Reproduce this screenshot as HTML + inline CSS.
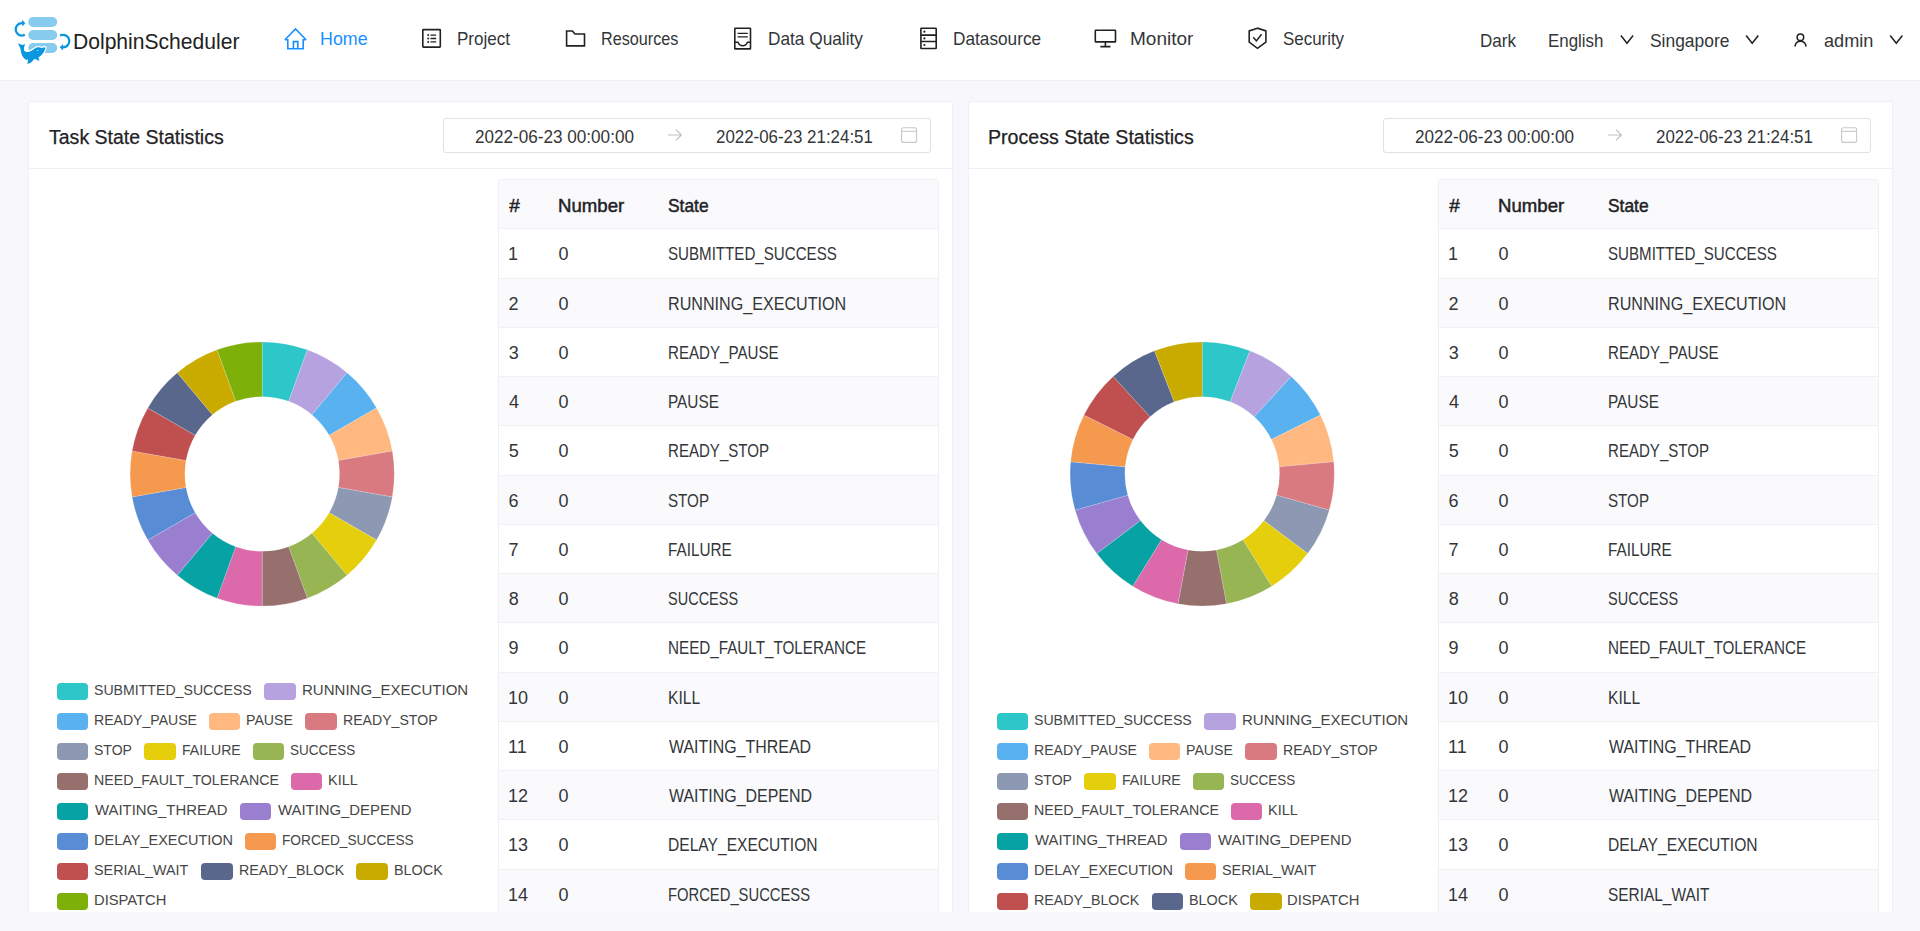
<!DOCTYPE html>
<html><head><meta charset="utf-8"><title>DolphinScheduler</title>
<style>
*{margin:0;padding:0;box-sizing:border-box}
html,body{width:1920px;height:931px;overflow:hidden;background:#f8f8fc;font-family:"Liberation Sans",sans-serif;color:#333639}
.abs{position:absolute}
.tx{position:absolute;line-height:1;white-space:nowrap;transform-origin:0 0}
#hdr{position:absolute;left:0;top:0;width:1920px;height:81px;background:#fff;border-bottom:1px solid #efeff5}
#content{position:absolute;left:0;top:81px;width:1920px;height:831px;overflow:hidden}
.card{position:absolute;top:20px;width:925px;height:1100px;background:#fff;border:1px solid #efeff5;border-radius:3px}
.chd{position:absolute;top:21px;width:923px;height:67px;border-bottom:1px solid #efeff5}
.picker{position:absolute;top:37px;width:488px;height:35px;border:1px solid #e0e0e6;border-radius:3px;background:#fff}
.tbl{position:absolute;width:441px;height:900px;border:1px solid #efeff5;border-radius:3px;background:#fff}
.stripe{width:439px;background:#fafafc}
.thead{width:439px;background:#fafafc;border-radius:2px 2px 0 0}
.hline{width:439px;height:1px;background:#efeff5}
.lrow{position:absolute;height:18px;white-space:nowrap;display:flex}
.li{display:inline-flex;align-items:center;font-size:14px;line-height:18px;color:#464646;margin-right:13px}
.li b{font-weight:normal;position:relative;top:-2px}
.li i{display:inline-block;width:31px;height:17.5px;border-radius:4px;margin-right:7px}
.sw{position:absolute;width:31.25px;height:17.5px;border-radius:4px}

</style></head>
<body>
<div id="hdr">
<svg class="abs" style="left:0;top:0" width="1920" height="80" viewBox="0 0 1920 80">
 <g id="logo">
  <rect x="28.3" y="17.1" width="28.9" height="9.9" rx="5" fill="#87cbee"/>
  <rect x="28.3" y="30" width="28.9" height="10" rx="5" fill="#87cbee"/>
  <rect x="28.3" y="43" width="28.9" height="9.9" rx="5" fill="#87cbee"/>
  <path d="M24 35.2 A6.2 6.2 0 1 1 22.5 23.2" fill="none" stroke="#0b96e0" stroke-width="2.3" stroke-linecap="round"/>
  <path d="M22 19.8 L25.3 23.2 L22.3 26.5 Z" fill="#0b96e0"/>
  <path d="M61 35.2 A6.2 6.2 0 1 1 62.5 47.2" fill="none" stroke="#0b96e0" stroke-width="2.3" stroke-linecap="round"/>
  <path d="M63 44 L59.8 47.3 L62.8 50.6 Z" fill="#0b96e0"/>
  <path d="M17.9 43.35 L22.1 44.9 L25.2 43.9 C24.6 45.5 23.6 48 24 50 C24.5 51.7 26.5 52.2 28.5 52 C31 51.7 34 49 36.3 47.8 C38 47 40 47.2 41.9 48.1 L44.9 47.2 C45.5 47.6 45.5 48.3 45.2 48.8 C44.5 51.5 42.5 54.5 40.5 56 L38.4 57.6 L39.5 60.6 L37.3 60.3 L35.8 59 C35 59.3 34.3 59.5 33.6 59.6 L32 61.8 C30.5 63 29 63.6 27.4 64 L28 59.6 C27 59.8 26.3 59.7 25.7 59.5 C23.5 58.5 21.2 55 20.7 50 C20.5 48.5 19.5 46.5 17.9 43.35 Z" fill="#fff" stroke="#fff" stroke-width="2.6" stroke-linejoin="round"/>
  <path d="M17.9 43.35 L22.1 44.9 L25.2 43.9 C24.6 45.5 23.6 48 24 50 C24.5 51.7 26.5 52.2 28.5 52 C31 51.7 34 49 36.3 47.8 C38 47 40 47.2 41.9 48.1 L44.9 47.2 C45.5 47.6 45.5 48.3 45.2 48.8 C44.5 51.5 42.5 54.5 40.5 56 L38.4 57.6 L39.5 60.6 L37.3 60.3 L35.8 59 C35 59.3 34.3 59.5 33.6 59.6 L32 61.8 C30.5 63 29 63.6 27.4 64 L28 59.6 C27 59.8 26.3 59.7 25.7 59.5 C23.5 58.5 21.2 55 20.7 50 C20.5 48.5 19.5 46.5 17.9 43.35 Z" fill="#0b96e0"/>
  <ellipse cx="37.7" cy="50.5" rx="0.8" ry="0.55" fill="#dff1fb"/>
 </g>
 <g fill="none" stroke="#1890ff" stroke-width="1.6" stroke-linejoin="miter">
  <path d="M287.8 48.7 V39.8 H285 L295.5 29 L306 39.8 H303.2 V48.7 Z" stroke-miterlimit="1.6"/>
  <path d="M293.4 48.7 V41.6 H297.8 V48.7"/>
 </g>
 <g fill="none" stroke="#1f2225" stroke-width="1.6">
  <rect x="422.8" y="29.6" width="17.5" height="17.5" rx="0.6"/>
  <path d="M430.5 35.1 H436.2 M430.5 38.5 H436.2 M430.5 41.9 H436.2" stroke-width="1.4"/>
  <path d="M566.6 31 H572.4 L575 34 H584.5 V45.9 H566.6 Z"/>
  <rect x="734.8" y="28.2" width="15.7" height="20.7" rx="0.5"/>
  <path d="M737.6 33.3 H747.8 M737.6 36.9 H747.8" stroke-width="1.3"/>
  <path d="M734.8 42.3 H738 C739 45.3 741.2 45.8 742.7 45.8 C744.2 45.8 746.4 45.3 747.4 42.3 H750.5" stroke-width="1.4"/>
  <rect x="920.9" y="28.3" width="15.3" height="20.2" rx="0.5"/>
  <path d="M920.9 35.1 H936.2 M920.9 41.5 H936.2"/>
  <rect x="1095.3" y="30.3" width="20.2" height="11.6" rx="0.5"/>
  <path d="M1105.4 41.9 V46.6 M1100.4 46.6 H1110.5"/>
  <path d="M1257.5 28.2 L1249.2 30.9 V42.1 L1257.5 48.3 L1265.9 42.1 V30.9 Z"/>
  <path d="M1253.3 37.3 L1256.4 40.9 L1261.6 34.2" stroke-width="1.5"/>
  <path d="M1620.9 35.5 L1627 43.3 L1633.1 35.5" stroke-width="1.5"/>
  <path d="M1746.1 35.5 L1752.2 43.3 L1758.3 35.5" stroke-width="1.5"/>
  <path d="M1890.2 35.5 L1896.3 43.3 L1902.4 35.5" stroke-width="1.5"/>
  <circle cx="1800.4" cy="37.2" r="3.3" stroke-width="1.5"/>
  <path d="M1794.9 46.5 C1795.5 43 1797.5 41.3 1800.4 41.3 C1803.3 41.3 1805.5 43 1806.1 46.5" stroke-width="1.5"/>
 </g>
 <g fill="#1f2225">
  <circle cx="428.2" cy="35.1" r="1"/><circle cx="428.2" cy="38.5" r="1"/><circle cx="428.2" cy="41.9" r="1"/>
  <circle cx="924.4" cy="31.7" r="1.1"/><circle cx="924.4" cy="38.4" r="1.1"/><circle cx="924.4" cy="45" r="1.1"/>
 </g>
</svg>
<div class="tx" style="left:73.32px;top:30.73px;font-size:22px;color:#222;transform:scaleX(0.9585);">DolphinScheduler</div>
<div class="tx" style="left:320.15px;top:29.84px;font-size:18.5px;color:#1890ff;transform:scaleX(0.9638);">Home</div>
<div class="tx" style="left:457.02px;top:29.94px;font-size:18.5px;color:#333639;transform:scaleX(0.9214);">Project</div>
<div class="tx" style="left:600.69px;top:29.94px;font-size:18.5px;color:#333639;transform:scaleX(0.8754);">Resources</div>
<div class="tx" style="left:768.10px;top:29.94px;font-size:18.5px;color:#333639;transform:scaleX(0.9327);">Data Quality</div>
<div class="tx" style="left:953.10px;top:29.94px;font-size:18.5px;color:#333639;transform:scaleX(0.9312);">Datasource</div>
<div class="tx" style="left:1129.96px;top:29.94px;font-size:18.5px;color:#333639;transform:scaleX(1.0271);">Monitor</div>
<div class="tx" style="left:1283.00px;top:29.94px;font-size:18.5px;color:#333639;transform:scaleX(0.9139);">Security</div>
<div class="tx" style="left:1479.62px;top:31.94px;font-size:18.5px;color:#333639;transform:scaleX(0.9200);">Dark</div>
<div class="tx" style="left:1548.13px;top:31.94px;font-size:18.5px;color:#333639;transform:scaleX(0.9138);">English</div>
<div class="tx" style="left:1650.18px;top:31.94px;font-size:18.5px;color:#333639;transform:scaleX(0.9410);">Singapore</div>
<div class="tx" style="left:1823.77px;top:31.94px;font-size:18.5px;color:#333639;transform:scaleX(0.9794);">admin</div>
</div>

<div id="content">
<div class="card" style="left:28px"></div>
<div class="chd" style="left:29px"></div>
<div class="picker" style="left:443px"></div>
<svg class="abs" width="20" height="18" viewBox="0 0 20 18" style="left:666px;top:45px"><path d="M2 9H15.2M10 3.6L15.4 9L10 14.4" fill="none" stroke="#c2c2c2" stroke-width="1.2"/></svg>
<svg class="abs" width="20" height="20" viewBox="0 0 20 20" style="left:899px;top:44px"><rect x="2.6" y="2.8" width="15" height="14.6" rx="2" fill="none" stroke="#c8c8c8" stroke-width="1.1"/><path d="M2.6 6.3H17.6" stroke="#c8c8c8" stroke-width="1.1"/></svg>
<svg class="abs" style="left:28px;top:20px" width="470" height="560" viewBox="28 101 470 560"><path d="M262.20,341.90A132.1,132.1 0 0 1 307.38,349.87L288.66,401.31A77.35,77.35 0 0 0 262.20,396.65Z" fill="#2ec7c9" stroke="#fff" stroke-width="0.5" stroke-opacity="0.35"/><path d="M307.38,349.87A132.1,132.1 0 0 1 347.11,372.81L311.92,414.75A77.35,77.35 0 0 0 288.66,401.31Z" fill="#b6a2de" stroke="#fff" stroke-width="0.5" stroke-opacity="0.35"/><path d="M347.11,372.81A132.1,132.1 0 0 1 376.60,407.95L329.19,435.32A77.35,77.35 0 0 0 311.92,414.75Z" fill="#5ab1ef" stroke="#fff" stroke-width="0.5" stroke-opacity="0.35"/><path d="M376.60,407.95A132.1,132.1 0 0 1 392.29,451.06L338.37,460.57A77.35,77.35 0 0 0 329.19,435.32Z" fill="#ffb980" stroke="#fff" stroke-width="0.5" stroke-opacity="0.35"/><path d="M392.29,451.06A132.1,132.1 0 0 1 392.29,496.94L338.37,487.43A77.35,77.35 0 0 0 338.37,460.57Z" fill="#d87a80" stroke="#fff" stroke-width="0.5" stroke-opacity="0.35"/><path d="M392.29,496.94A132.1,132.1 0 0 1 376.60,540.05L329.19,512.67A77.35,77.35 0 0 0 338.37,487.43Z" fill="#8d98b3" stroke="#fff" stroke-width="0.5" stroke-opacity="0.35"/><path d="M376.60,540.05A132.1,132.1 0 0 1 347.11,575.19L311.92,533.25A77.35,77.35 0 0 0 329.19,512.67Z" fill="#e5cf0d" stroke="#fff" stroke-width="0.5" stroke-opacity="0.35"/><path d="M347.11,575.19A132.1,132.1 0 0 1 307.38,598.13L288.66,546.69A77.35,77.35 0 0 0 311.92,533.25Z" fill="#97b552" stroke="#fff" stroke-width="0.5" stroke-opacity="0.35"/><path d="M307.38,598.13A132.1,132.1 0 0 1 262.20,606.10L262.20,551.35A77.35,77.35 0 0 0 288.66,546.69Z" fill="#95706d" stroke="#fff" stroke-width="0.5" stroke-opacity="0.35"/><path d="M262.20,606.10A132.1,132.1 0 0 1 217.02,598.13L235.74,546.69A77.35,77.35 0 0 0 262.20,551.35Z" fill="#dc69aa" stroke="#fff" stroke-width="0.5" stroke-opacity="0.35"/><path d="M217.02,598.13A132.1,132.1 0 0 1 177.29,575.19L212.48,533.25A77.35,77.35 0 0 0 235.74,546.69Z" fill="#07a2a4" stroke="#fff" stroke-width="0.5" stroke-opacity="0.35"/><path d="M177.29,575.19A132.1,132.1 0 0 1 147.80,540.05L195.21,512.68A77.35,77.35 0 0 0 212.48,533.25Z" fill="#9a7fd1" stroke="#fff" stroke-width="0.5" stroke-opacity="0.35"/><path d="M147.80,540.05A132.1,132.1 0 0 1 132.11,496.94L186.03,487.43A77.35,77.35 0 0 0 195.21,512.68Z" fill="#588dd5" stroke="#fff" stroke-width="0.5" stroke-opacity="0.35"/><path d="M132.11,496.94A132.1,132.1 0 0 1 132.11,451.06L186.03,460.57A77.35,77.35 0 0 0 186.03,487.43Z" fill="#f5994e" stroke="#fff" stroke-width="0.5" stroke-opacity="0.35"/><path d="M132.11,451.06A132.1,132.1 0 0 1 147.80,407.95L195.21,435.33A77.35,77.35 0 0 0 186.03,460.57Z" fill="#c05050" stroke="#fff" stroke-width="0.5" stroke-opacity="0.35"/><path d="M147.80,407.95A132.1,132.1 0 0 1 177.29,372.81L212.48,414.75A77.35,77.35 0 0 0 195.21,435.33Z" fill="#59678c" stroke="#fff" stroke-width="0.5" stroke-opacity="0.35"/><path d="M177.29,372.81A132.1,132.1 0 0 1 217.02,349.87L235.74,401.31A77.35,77.35 0 0 0 212.48,414.75Z" fill="#c9ab00" stroke="#fff" stroke-width="0.5" stroke-opacity="0.35"/><path d="M217.02,349.87A132.1,132.1 0 0 1 262.20,341.90L262.20,396.65A77.35,77.35 0 0 0 235.74,401.31Z" fill="#7eb00a" stroke="#fff" stroke-width="0.5" stroke-opacity="0.35"/></svg>
<div class="sw" style="left:56.75px;top:601.75px;background:#2ec7c9"></div>
<div class="sw" style="left:264.35px;top:601.75px;background:#b6a2de"></div>
<div class="sw" style="left:56.75px;top:631.75px;background:#5ab1ef"></div>
<div class="sw" style="left:209.15px;top:631.75px;background:#ffb980"></div>
<div class="sw" style="left:305.35px;top:631.75px;background:#d87a80"></div>
<div class="sw" style="left:56.75px;top:661.75px;background:#8d98b3"></div>
<div class="sw" style="left:144.45px;top:661.75px;background:#e5cf0d"></div>
<div class="sw" style="left:252.55px;top:661.75px;background:#97b552"></div>
<div class="sw" style="left:56.75px;top:691.75px;background:#95706d"></div>
<div class="sw" style="left:291.15px;top:691.75px;background:#dc69aa"></div>
<div class="sw" style="left:56.75px;top:721.75px;background:#07a2a4"></div>
<div class="sw" style="left:239.65px;top:721.75px;background:#9a7fd1"></div>
<div class="sw" style="left:56.75px;top:751.75px;background:#588dd5"></div>
<div class="sw" style="left:244.65px;top:751.75px;background:#f5994e"></div>
<div class="sw" style="left:56.75px;top:781.75px;background:#c05050"></div>
<div class="sw" style="left:201.25px;top:781.75px;background:#59678c"></div>
<div class="sw" style="left:356.25px;top:781.75px;background:#c9ab00"></div>
<div class="sw" style="left:56.75px;top:811.75px;background:#7eb00a"></div>
<div class="tbl" style="left:498px;top:98px"></div>
<div class="abs hline" style="left:499px;top:147.40px"></div>
<div class="abs stripe" style="left:499px;top:197.65px;height:49.25px"></div>
<div class="abs hline" style="left:499px;top:196.65px"></div>
<div class="abs hline" style="left:499px;top:245.90px"></div>
<div class="abs stripe" style="left:499px;top:296.15px;height:49.25px"></div>
<div class="abs hline" style="left:499px;top:295.15px"></div>
<div class="abs hline" style="left:499px;top:344.40px"></div>
<div class="abs stripe" style="left:499px;top:394.65px;height:49.25px"></div>
<div class="abs hline" style="left:499px;top:393.65px"></div>
<div class="abs hline" style="left:499px;top:442.90px"></div>
<div class="abs stripe" style="left:499px;top:493.15px;height:49.25px"></div>
<div class="abs hline" style="left:499px;top:492.15px"></div>
<div class="abs hline" style="left:499px;top:541.40px"></div>
<div class="abs stripe" style="left:499px;top:591.65px;height:49.25px"></div>
<div class="abs hline" style="left:499px;top:590.65px"></div>
<div class="abs hline" style="left:499px;top:639.90px"></div>
<div class="abs stripe" style="left:499px;top:690.15px;height:49.25px"></div>
<div class="abs hline" style="left:499px;top:689.15px"></div>
<div class="abs hline" style="left:499px;top:738.40px"></div>
<div class="abs stripe" style="left:499px;top:788.65px;height:49.25px"></div>
<div class="abs hline" style="left:499px;top:787.65px"></div>
<div class="abs hline" style="left:499px;top:836.90px"></div>
<div class="abs thead" style="left:499px;top:99px;height:48.4px"></div>
<div class="tx" style="left:48.83px;top:45.57px;font-size:20px;color:#1f2225;-webkit-text-stroke:0.25px #1f2225;transform:scaleX(0.9760);">Task State Statistics</div>
<div class="tx" style="left:474.67px;top:47.06px;font-size:18px;color:#333639;transform:scaleX(0.9509);">2022-06-23 00:00:00</div>
<div class="tx" style="left:715.68px;top:47.06px;font-size:18px;color:#333639;transform:scaleX(0.9385);">2022-06-23 21:24:51</div>
<div class="tx" style="left:94.48px;top:601.16px;font-size:15.4px;color:#464646;transform:scaleX(0.9179);">SUBMITTED_SUCCESS</div>
<div class="tx" style="left:301.55px;top:601.16px;font-size:15.4px;color:#464646;transform:scaleX(0.9765);">RUNNING_EXECUTION</div>
<div class="tx" style="left:94.03px;top:631.16px;font-size:15.4px;color:#464646;transform:scaleX(0.9147);">READY_PAUSE</div>
<div class="tx" style="left:246.43px;top:631.16px;font-size:15.4px;color:#464646;transform:scaleX(0.9181);">PAUSE</div>
<div class="tx" style="left:342.63px;top:631.16px;font-size:15.4px;color:#464646;transform:scaleX(0.9165);">READY_STOP</div>
<div class="tx" style="left:94.49px;top:661.16px;font-size:15.4px;color:#464646;transform:scaleX(0.9121);">STOP</div>
<div class="tx" style="left:181.73px;top:661.16px;font-size:15.4px;color:#464646;transform:scaleX(0.9157);">FAILURE</div>
<div class="tx" style="left:290.31px;top:661.16px;font-size:15.4px;color:#464646;transform:scaleX(0.8767);">SUCCESS</div>
<div class="tx" style="left:94.02px;top:691.16px;font-size:15.4px;color:#464646;transform:scaleX(0.9228);">NEED_FAULT_TOLERANCE</div>
<div class="tx" style="left:328.39px;top:691.16px;font-size:15.4px;color:#464646;transform:scaleX(0.9433);">KILL</div>
<div class="tx" style="left:95.05px;top:721.16px;font-size:15.4px;color:#464646;transform:scaleX(0.9665);">WAITING_THREAD</div>
<div class="tx" style="left:277.95px;top:721.16px;font-size:15.4px;color:#464646;transform:scaleX(0.9668);">WAITING_DEPEND</div>
<div class="tx" style="left:94.00px;top:751.16px;font-size:15.4px;color:#464646;transform:scaleX(0.9418);">DELAY_EXECUTION</div>
<div class="tx" style="left:281.96px;top:751.16px;font-size:15.4px;color:#464646;transform:scaleX(0.8903);">FORCED_SUCCESS</div>
<div class="tx" style="left:94.47px;top:781.16px;font-size:15.4px;color:#464646;transform:scaleX(0.9317);">SERIAL_WAIT</div>
<div class="tx" style="left:238.52px;top:781.16px;font-size:15.4px;color:#464646;transform:scaleX(0.9246);">READY_BLOCK</div>
<div class="tx" style="left:393.51px;top:781.16px;font-size:15.4px;color:#464646;transform:scaleX(0.9340);">BLOCK</div>
<div class="tx" style="left:93.98px;top:811.16px;font-size:15.4px;color:#464646;transform:scaleX(0.9586);">DISPATCH</div>
<div class="tx" style="left:509.18px;top:114.77px;font-size:19px;color:#1f2225;-webkit-text-stroke:0.5px #1f2225;">#</div>
<div class="tx" style="left:558.13px;top:114.77px;font-size:19px;color:#1f2225;-webkit-text-stroke:0.5px #1f2225;transform:scaleX(0.9795);">Number</div>
<div class="tx" style="left:668.20px;top:114.77px;font-size:19px;color:#1f2225;-webkit-text-stroke:0.5px #1f2225;transform:scaleX(0.9150);">State</div>
<div class="tx" style="left:508.12px;top:164.26px;font-size:18px;color:#333639;">1</div>
<div class="tx" style="left:558.45px;top:164.26px;font-size:18px;color:#333639;">0</div>
<div class="tx" style="left:668.27px;top:164.26px;font-size:18px;color:#333639;transform:scaleX(0.8396);">SUBMITTED_SUCCESS</div>
<div class="tx" style="left:508.62px;top:213.51px;font-size:18px;color:#333639;">2</div>
<div class="tx" style="left:558.45px;top:213.51px;font-size:18px;color:#333639;">0</div>
<div class="tx" style="left:667.66px;top:213.51px;font-size:18px;color:#333639;transform:scaleX(0.8953);">RUNNING_EXECUTION</div>
<div class="tx" style="left:508.75px;top:262.76px;font-size:18px;color:#333639;">3</div>
<div class="tx" style="left:558.45px;top:262.76px;font-size:18px;color:#333639;">0</div>
<div class="tx" style="left:667.74px;top:262.76px;font-size:18px;color:#333639;transform:scaleX(0.8394);">READY_PAUSE</div>
<div class="tx" style="left:509.12px;top:312.01px;font-size:18px;color:#333639;">4</div>
<div class="tx" style="left:558.45px;top:312.01px;font-size:18px;color:#333639;">0</div>
<div class="tx" style="left:667.72px;top:312.01px;font-size:18px;color:#333639;transform:scaleX(0.8523);">PAUSE</div>
<div class="tx" style="left:508.75px;top:361.26px;font-size:18px;color:#333639;">5</div>
<div class="tx" style="left:558.45px;top:361.26px;font-size:18px;color:#333639;">0</div>
<div class="tx" style="left:667.74px;top:361.26px;font-size:18px;color:#333639;transform:scaleX(0.8372);">READY_STOP</div>
<div class="tx" style="left:508.62px;top:410.51px;font-size:18px;color:#333639;">6</div>
<div class="tx" style="left:558.45px;top:410.51px;font-size:18px;color:#333639;">0</div>
<div class="tx" style="left:668.26px;top:410.51px;font-size:18px;color:#333639;transform:scaleX(0.8427);">STOP</div>
<div class="tx" style="left:508.62px;top:459.76px;font-size:18px;color:#333639;">7</div>
<div class="tx" style="left:558.45px;top:459.76px;font-size:18px;color:#333639;">0</div>
<div class="tx" style="left:667.73px;top:459.76px;font-size:18px;color:#333639;transform:scaleX(0.8495);">FAILURE</div>
<div class="tx" style="left:508.75px;top:509.01px;font-size:18px;color:#333639;">8</div>
<div class="tx" style="left:558.45px;top:509.01px;font-size:18px;color:#333639;">0</div>
<div class="tx" style="left:668.29px;top:509.01px;font-size:18px;color:#333639;transform:scaleX(0.8059);">SUCCESS</div>
<div class="tx" style="left:508.62px;top:558.26px;font-size:18px;color:#333639;">9</div>
<div class="tx" style="left:558.45px;top:558.26px;font-size:18px;color:#333639;">0</div>
<div class="tx" style="left:667.73px;top:558.26px;font-size:18px;color:#333639;transform:scaleX(0.8457);">NEED_FAULT_TOLERANCE</div>
<div class="tx" style="left:508.12px;top:607.51px;font-size:18px;color:#333639;">10</div>
<div class="tx" style="left:558.45px;top:607.51px;font-size:18px;color:#333639;">0</div>
<div class="tx" style="left:667.70px;top:607.51px;font-size:18px;color:#333639;transform:scaleX(0.8686);">KILL</div>
<div class="tx" style="left:508.12px;top:656.76px;font-size:18px;color:#333639;">11</div>
<div class="tx" style="left:558.45px;top:656.76px;font-size:18px;color:#333639;">0</div>
<div class="tx" style="left:668.89px;top:656.76px;font-size:18px;color:#333639;transform:scaleX(0.8860);">WAITING_THREAD</div>
<div class="tx" style="left:508.12px;top:706.01px;font-size:18px;color:#333639;">12</div>
<div class="tx" style="left:558.45px;top:706.01px;font-size:18px;color:#333639;">0</div>
<div class="tx" style="left:668.89px;top:706.01px;font-size:18px;color:#333639;transform:scaleX(0.8867);">WAITING_DEPEND</div>
<div class="tx" style="left:508.12px;top:755.26px;font-size:18px;color:#333639;">13</div>
<div class="tx" style="left:558.45px;top:755.26px;font-size:18px;color:#333639;">0</div>
<div class="tx" style="left:667.70px;top:755.26px;font-size:18px;color:#333639;transform:scaleX(0.8660);">DELAY_EXECUTION</div>
<div class="tx" style="left:508.12px;top:804.51px;font-size:18px;color:#333639;">14</div>
<div class="tx" style="left:558.45px;top:804.51px;font-size:18px;color:#333639;">0</div>
<div class="tx" style="left:667.77px;top:804.51px;font-size:18px;color:#333639;transform:scaleX(0.8211);">FORCED_SUCCESS</div>
<div class="tx" style="left:508.12px;top:853.76px;font-size:18px;color:#333639;">15</div>
<div class="tx" style="left:558.45px;top:853.76px;font-size:18px;color:#333639;">0</div>
<div class="tx" style="left:668.25px;top:853.76px;font-size:18px;color:#333639;transform:scaleX(0.8564);">SERIAL_WAIT</div>
<div class="card" style="left:968px"></div>
<div class="chd" style="left:969px"></div>
<div class="picker" style="left:1383px"></div>
<svg class="abs" width="20" height="18" viewBox="0 0 20 18" style="left:1606px;top:45px"><path d="M2 9H15.2M10 3.6L15.4 9L10 14.4" fill="none" stroke="#c2c2c2" stroke-width="1.2"/></svg>
<svg class="abs" width="20" height="20" viewBox="0 0 20 20" style="left:1839px;top:44px"><rect x="2.6" y="2.8" width="15" height="14.6" rx="2" fill="none" stroke="#c8c8c8" stroke-width="1.1"/><path d="M2.6 6.3H17.6" stroke="#c8c8c8" stroke-width="1.1"/></svg>
<svg class="abs" style="left:968px;top:20px" width="470" height="560" viewBox="968 101 470 560"><path d="M1202.20,341.90A132.1,132.1 0 0 1 1249.92,350.82L1230.14,401.87A77.35,77.35 0 0 0 1202.20,396.65Z" fill="#2ec7c9" stroke="#fff" stroke-width="0.5" stroke-opacity="0.35"/><path d="M1249.92,350.82A132.1,132.1 0 0 1 1291.20,376.38L1254.31,416.84A77.35,77.35 0 0 0 1230.14,401.87Z" fill="#b6a2de" stroke="#fff" stroke-width="0.5" stroke-opacity="0.35"/><path d="M1291.20,376.38A132.1,132.1 0 0 1 1320.45,415.12L1271.44,439.52A77.35,77.35 0 0 0 1254.31,416.84Z" fill="#5ab1ef" stroke="#fff" stroke-width="0.5" stroke-opacity="0.35"/><path d="M1320.45,415.12A132.1,132.1 0 0 1 1333.74,461.81L1279.22,466.86A77.35,77.35 0 0 0 1271.44,439.52Z" fill="#ffb980" stroke="#fff" stroke-width="0.5" stroke-opacity="0.35"/><path d="M1333.74,461.81A132.1,132.1 0 0 1 1329.26,510.15L1276.60,495.17A77.35,77.35 0 0 0 1279.22,466.86Z" fill="#d87a80" stroke="#fff" stroke-width="0.5" stroke-opacity="0.35"/><path d="M1329.26,510.15A132.1,132.1 0 0 1 1307.62,553.61L1263.93,520.61A77.35,77.35 0 0 0 1276.60,495.17Z" fill="#8d98b3" stroke="#fff" stroke-width="0.5" stroke-opacity="0.35"/><path d="M1307.62,553.61A132.1,132.1 0 0 1 1271.74,586.31L1242.92,539.76A77.35,77.35 0 0 0 1263.93,520.61Z" fill="#e5cf0d" stroke="#fff" stroke-width="0.5" stroke-opacity="0.35"/><path d="M1271.74,586.31A132.1,132.1 0 0 1 1226.47,603.85L1216.41,550.03A77.35,77.35 0 0 0 1242.92,539.76Z" fill="#97b552" stroke="#fff" stroke-width="0.5" stroke-opacity="0.35"/><path d="M1226.47,603.85A132.1,132.1 0 0 1 1177.93,603.85L1187.99,550.03A77.35,77.35 0 0 0 1216.41,550.03Z" fill="#95706d" stroke="#fff" stroke-width="0.5" stroke-opacity="0.35"/><path d="M1177.93,603.85A132.1,132.1 0 0 1 1132.66,586.31L1161.48,539.76A77.35,77.35 0 0 0 1187.99,550.03Z" fill="#dc69aa" stroke="#fff" stroke-width="0.5" stroke-opacity="0.35"/><path d="M1132.66,586.31A132.1,132.1 0 0 1 1096.78,553.61L1140.47,520.61A77.35,77.35 0 0 0 1161.48,539.76Z" fill="#07a2a4" stroke="#fff" stroke-width="0.5" stroke-opacity="0.35"/><path d="M1096.78,553.61A132.1,132.1 0 0 1 1075.14,510.15L1127.80,495.17A77.35,77.35 0 0 0 1140.47,520.61Z" fill="#9a7fd1" stroke="#fff" stroke-width="0.5" stroke-opacity="0.35"/><path d="M1075.14,510.15A132.1,132.1 0 0 1 1070.66,461.81L1125.18,466.86A77.35,77.35 0 0 0 1127.80,495.17Z" fill="#588dd5" stroke="#fff" stroke-width="0.5" stroke-opacity="0.35"/><path d="M1070.66,461.81A132.1,132.1 0 0 1 1083.95,415.12L1132.96,439.52A77.35,77.35 0 0 0 1125.18,466.86Z" fill="#f5994e" stroke="#fff" stroke-width="0.5" stroke-opacity="0.35"/><path d="M1083.95,415.12A132.1,132.1 0 0 1 1113.20,376.38L1150.09,416.84A77.35,77.35 0 0 0 1132.96,439.52Z" fill="#c05050" stroke="#fff" stroke-width="0.5" stroke-opacity="0.35"/><path d="M1113.20,376.38A132.1,132.1 0 0 1 1154.48,350.82L1174.26,401.87A77.35,77.35 0 0 0 1150.09,416.84Z" fill="#59678c" stroke="#fff" stroke-width="0.5" stroke-opacity="0.35"/><path d="M1154.48,350.82A132.1,132.1 0 0 1 1202.20,341.90L1202.20,396.65A77.35,77.35 0 0 0 1174.26,401.87Z" fill="#c9ab00" stroke="#fff" stroke-width="0.5" stroke-opacity="0.35"/></svg>
<div class="sw" style="left:996.75px;top:631.75px;background:#2ec7c9"></div>
<div class="sw" style="left:1204.35px;top:631.75px;background:#b6a2de"></div>
<div class="sw" style="left:996.75px;top:661.75px;background:#5ab1ef"></div>
<div class="sw" style="left:1149.15px;top:661.75px;background:#ffb980"></div>
<div class="sw" style="left:1245.35px;top:661.75px;background:#d87a80"></div>
<div class="sw" style="left:996.75px;top:691.75px;background:#8d98b3"></div>
<div class="sw" style="left:1084.45px;top:691.75px;background:#e5cf0d"></div>
<div class="sw" style="left:1192.55px;top:691.75px;background:#97b552"></div>
<div class="sw" style="left:996.75px;top:721.75px;background:#95706d"></div>
<div class="sw" style="left:1231.15px;top:721.75px;background:#dc69aa"></div>
<div class="sw" style="left:996.75px;top:751.75px;background:#07a2a4"></div>
<div class="sw" style="left:1179.65px;top:751.75px;background:#9a7fd1"></div>
<div class="sw" style="left:996.75px;top:781.75px;background:#588dd5"></div>
<div class="sw" style="left:1184.65px;top:781.75px;background:#f5994e"></div>
<div class="sw" style="left:996.75px;top:811.75px;background:#c05050"></div>
<div class="sw" style="left:1151.75px;top:811.75px;background:#59678c"></div>
<div class="sw" style="left:1250.25px;top:811.75px;background:#c9ab00"></div>
<div class="tbl" style="left:1438px;top:98px"></div>
<div class="abs hline" style="left:1439px;top:147.40px"></div>
<div class="abs stripe" style="left:1439px;top:197.65px;height:49.25px"></div>
<div class="abs hline" style="left:1439px;top:196.65px"></div>
<div class="abs hline" style="left:1439px;top:245.90px"></div>
<div class="abs stripe" style="left:1439px;top:296.15px;height:49.25px"></div>
<div class="abs hline" style="left:1439px;top:295.15px"></div>
<div class="abs hline" style="left:1439px;top:344.40px"></div>
<div class="abs stripe" style="left:1439px;top:394.65px;height:49.25px"></div>
<div class="abs hline" style="left:1439px;top:393.65px"></div>
<div class="abs hline" style="left:1439px;top:442.90px"></div>
<div class="abs stripe" style="left:1439px;top:493.15px;height:49.25px"></div>
<div class="abs hline" style="left:1439px;top:492.15px"></div>
<div class="abs hline" style="left:1439px;top:541.40px"></div>
<div class="abs stripe" style="left:1439px;top:591.65px;height:49.25px"></div>
<div class="abs hline" style="left:1439px;top:590.65px"></div>
<div class="abs hline" style="left:1439px;top:639.90px"></div>
<div class="abs stripe" style="left:1439px;top:690.15px;height:49.25px"></div>
<div class="abs hline" style="left:1439px;top:689.15px"></div>
<div class="abs hline" style="left:1439px;top:738.40px"></div>
<div class="abs stripe" style="left:1439px;top:788.65px;height:49.25px"></div>
<div class="abs hline" style="left:1439px;top:787.65px"></div>
<div class="abs hline" style="left:1439px;top:836.90px"></div>
<div class="abs thead" style="left:1439px;top:99px;height:48.4px"></div>
<div class="tx" style="left:987.61px;top:45.57px;font-size:20px;color:#1f2225;-webkit-text-stroke:0.25px #1f2225;transform:scaleX(0.9791);">Process State Statistics</div>
<div class="tx" style="left:1414.67px;top:47.06px;font-size:18px;color:#333639;transform:scaleX(0.9509);">2022-06-23 00:00:00</div>
<div class="tx" style="left:1655.68px;top:47.06px;font-size:18px;color:#333639;transform:scaleX(0.9385);">2022-06-23 21:24:51</div>
<div class="tx" style="left:1034.48px;top:631.16px;font-size:15.4px;color:#464646;transform:scaleX(0.9179);">SUBMITTED_SUCCESS</div>
<div class="tx" style="left:1241.55px;top:631.16px;font-size:15.4px;color:#464646;transform:scaleX(0.9765);">RUNNING_EXECUTION</div>
<div class="tx" style="left:1034.03px;top:661.16px;font-size:15.4px;color:#464646;transform:scaleX(0.9147);">READY_PAUSE</div>
<div class="tx" style="left:1186.43px;top:661.16px;font-size:15.4px;color:#464646;transform:scaleX(0.9181);">PAUSE</div>
<div class="tx" style="left:1282.63px;top:661.16px;font-size:15.4px;color:#464646;transform:scaleX(0.9165);">READY_STOP</div>
<div class="tx" style="left:1034.49px;top:691.16px;font-size:15.4px;color:#464646;transform:scaleX(0.9121);">STOP</div>
<div class="tx" style="left:1121.73px;top:691.16px;font-size:15.4px;color:#464646;transform:scaleX(0.9157);">FAILURE</div>
<div class="tx" style="left:1230.31px;top:691.16px;font-size:15.4px;color:#464646;transform:scaleX(0.8767);">SUCCESS</div>
<div class="tx" style="left:1034.02px;top:721.16px;font-size:15.4px;color:#464646;transform:scaleX(0.9228);">NEED_FAULT_TOLERANCE</div>
<div class="tx" style="left:1268.39px;top:721.16px;font-size:15.4px;color:#464646;transform:scaleX(0.9433);">KILL</div>
<div class="tx" style="left:1035.05px;top:751.16px;font-size:15.4px;color:#464646;transform:scaleX(0.9665);">WAITING_THREAD</div>
<div class="tx" style="left:1217.95px;top:751.16px;font-size:15.4px;color:#464646;transform:scaleX(0.9668);">WAITING_DEPEND</div>
<div class="tx" style="left:1034.00px;top:781.16px;font-size:15.4px;color:#464646;transform:scaleX(0.9418);">DELAY_EXECUTION</div>
<div class="tx" style="left:1222.37px;top:781.16px;font-size:15.4px;color:#464646;transform:scaleX(0.9317);">SERIAL_WAIT</div>
<div class="tx" style="left:1034.02px;top:811.16px;font-size:15.4px;color:#464646;transform:scaleX(0.9246);">READY_BLOCK</div>
<div class="tx" style="left:1189.01px;top:811.16px;font-size:15.4px;color:#464646;transform:scaleX(0.9340);">BLOCK</div>
<div class="tx" style="left:1287.48px;top:811.16px;font-size:15.4px;color:#464646;transform:scaleX(0.9586);">DISPATCH</div>
<div class="tx" style="left:1449.17px;top:114.77px;font-size:19px;color:#1f2225;-webkit-text-stroke:0.5px #1f2225;">#</div>
<div class="tx" style="left:1498.13px;top:114.77px;font-size:19px;color:#1f2225;-webkit-text-stroke:0.5px #1f2225;transform:scaleX(0.9795);">Number</div>
<div class="tx" style="left:1608.20px;top:114.77px;font-size:19px;color:#1f2225;-webkit-text-stroke:0.5px #1f2225;transform:scaleX(0.9150);">State</div>
<div class="tx" style="left:1448.12px;top:164.26px;font-size:18px;color:#333639;">1</div>
<div class="tx" style="left:1498.45px;top:164.26px;font-size:18px;color:#333639;">0</div>
<div class="tx" style="left:1608.27px;top:164.26px;font-size:18px;color:#333639;transform:scaleX(0.8396);">SUBMITTED_SUCCESS</div>
<div class="tx" style="left:1448.62px;top:213.51px;font-size:18px;color:#333639;">2</div>
<div class="tx" style="left:1498.45px;top:213.51px;font-size:18px;color:#333639;">0</div>
<div class="tx" style="left:1607.66px;top:213.51px;font-size:18px;color:#333639;transform:scaleX(0.8953);">RUNNING_EXECUTION</div>
<div class="tx" style="left:1448.75px;top:262.76px;font-size:18px;color:#333639;">3</div>
<div class="tx" style="left:1498.45px;top:262.76px;font-size:18px;color:#333639;">0</div>
<div class="tx" style="left:1607.74px;top:262.76px;font-size:18px;color:#333639;transform:scaleX(0.8394);">READY_PAUSE</div>
<div class="tx" style="left:1449.12px;top:312.01px;font-size:18px;color:#333639;">4</div>
<div class="tx" style="left:1498.45px;top:312.01px;font-size:18px;color:#333639;">0</div>
<div class="tx" style="left:1607.72px;top:312.01px;font-size:18px;color:#333639;transform:scaleX(0.8523);">PAUSE</div>
<div class="tx" style="left:1448.75px;top:361.26px;font-size:18px;color:#333639;">5</div>
<div class="tx" style="left:1498.45px;top:361.26px;font-size:18px;color:#333639;">0</div>
<div class="tx" style="left:1607.74px;top:361.26px;font-size:18px;color:#333639;transform:scaleX(0.8372);">READY_STOP</div>
<div class="tx" style="left:1448.62px;top:410.51px;font-size:18px;color:#333639;">6</div>
<div class="tx" style="left:1498.45px;top:410.51px;font-size:18px;color:#333639;">0</div>
<div class="tx" style="left:1608.26px;top:410.51px;font-size:18px;color:#333639;transform:scaleX(0.8427);">STOP</div>
<div class="tx" style="left:1448.62px;top:459.76px;font-size:18px;color:#333639;">7</div>
<div class="tx" style="left:1498.45px;top:459.76px;font-size:18px;color:#333639;">0</div>
<div class="tx" style="left:1607.73px;top:459.76px;font-size:18px;color:#333639;transform:scaleX(0.8495);">FAILURE</div>
<div class="tx" style="left:1448.75px;top:509.01px;font-size:18px;color:#333639;">8</div>
<div class="tx" style="left:1498.45px;top:509.01px;font-size:18px;color:#333639;">0</div>
<div class="tx" style="left:1608.29px;top:509.01px;font-size:18px;color:#333639;transform:scaleX(0.8059);">SUCCESS</div>
<div class="tx" style="left:1448.62px;top:558.26px;font-size:18px;color:#333639;">9</div>
<div class="tx" style="left:1498.45px;top:558.26px;font-size:18px;color:#333639;">0</div>
<div class="tx" style="left:1607.73px;top:558.26px;font-size:18px;color:#333639;transform:scaleX(0.8457);">NEED_FAULT_TOLERANCE</div>
<div class="tx" style="left:1448.12px;top:607.51px;font-size:18px;color:#333639;">10</div>
<div class="tx" style="left:1498.45px;top:607.51px;font-size:18px;color:#333639;">0</div>
<div class="tx" style="left:1607.70px;top:607.51px;font-size:18px;color:#333639;transform:scaleX(0.8686);">KILL</div>
<div class="tx" style="left:1448.12px;top:656.76px;font-size:18px;color:#333639;">11</div>
<div class="tx" style="left:1498.45px;top:656.76px;font-size:18px;color:#333639;">0</div>
<div class="tx" style="left:1608.89px;top:656.76px;font-size:18px;color:#333639;transform:scaleX(0.8860);">WAITING_THREAD</div>
<div class="tx" style="left:1448.12px;top:706.01px;font-size:18px;color:#333639;">12</div>
<div class="tx" style="left:1498.45px;top:706.01px;font-size:18px;color:#333639;">0</div>
<div class="tx" style="left:1608.89px;top:706.01px;font-size:18px;color:#333639;transform:scaleX(0.8867);">WAITING_DEPEND</div>
<div class="tx" style="left:1448.12px;top:755.26px;font-size:18px;color:#333639;">13</div>
<div class="tx" style="left:1498.45px;top:755.26px;font-size:18px;color:#333639;">0</div>
<div class="tx" style="left:1607.70px;top:755.26px;font-size:18px;color:#333639;transform:scaleX(0.8660);">DELAY_EXECUTION</div>
<div class="tx" style="left:1448.12px;top:804.51px;font-size:18px;color:#333639;">14</div>
<div class="tx" style="left:1498.45px;top:804.51px;font-size:18px;color:#333639;">0</div>
<div class="tx" style="left:1608.25px;top:804.51px;font-size:18px;color:#333639;transform:scaleX(0.8564);">SERIAL_WAIT</div>
<div class="tx" style="left:1448.12px;top:853.76px;font-size:18px;color:#333639;">15</div>
<div class="tx" style="left:1498.45px;top:853.76px;font-size:18px;color:#333639;">0</div>
<div class="tx" style="left:1607.79px;top:853.76px;font-size:18px;color:#333639;transform:scaleX(0.8076);">READY_BLOCK</div>
</div>
</body></html>
